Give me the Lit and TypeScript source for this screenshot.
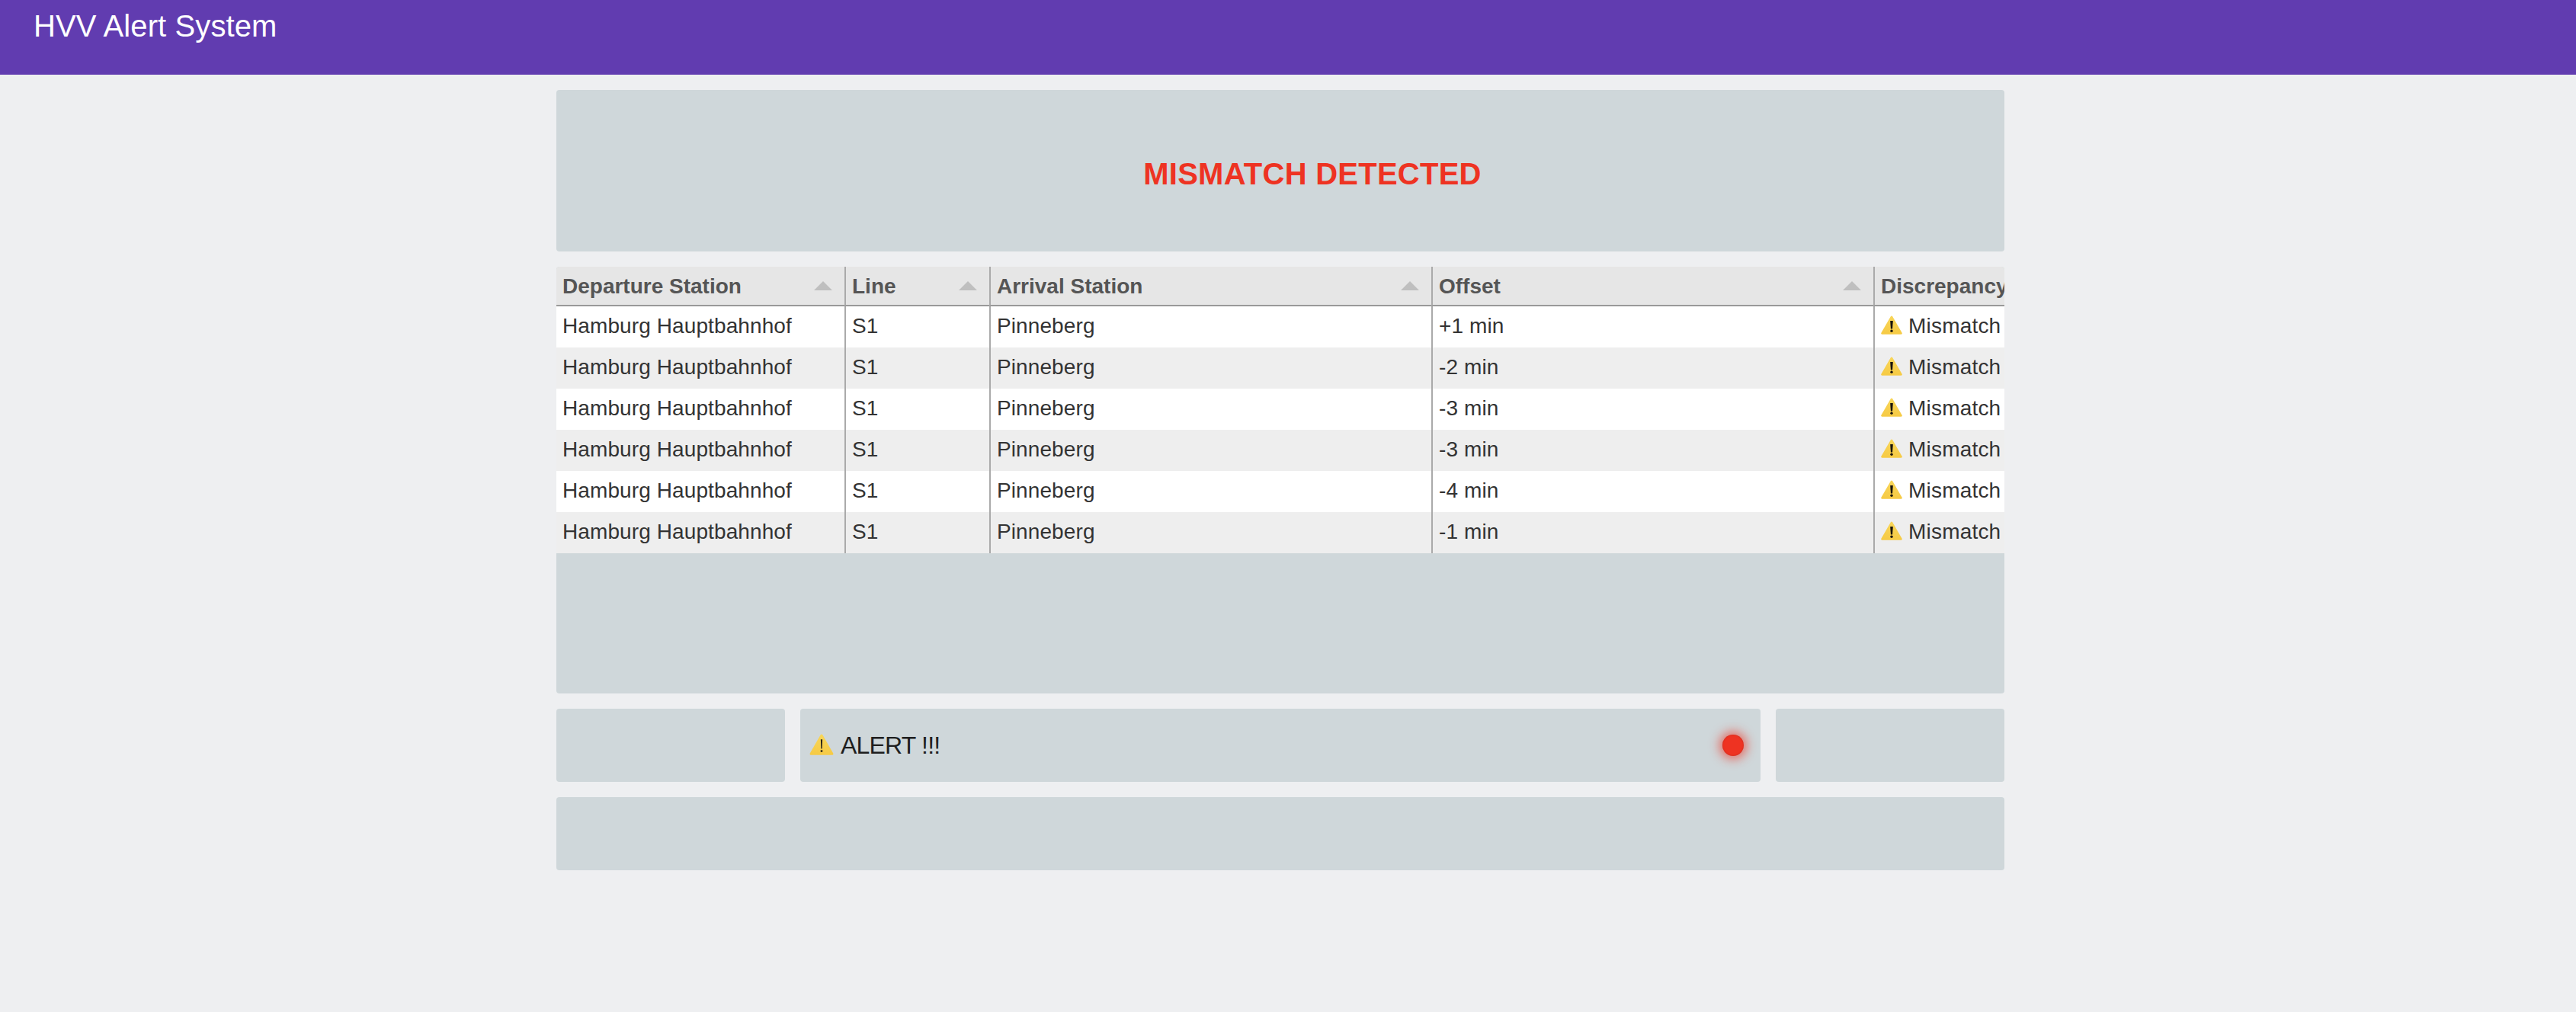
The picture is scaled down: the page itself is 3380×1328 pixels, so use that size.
import { LitElement, html, css, svg } from "lit";
import { customElement } from "lit/decorators.js";

const offsets = ["+1 min", "-2 min", "-3 min", "-3 min", "-4 min", "-1 min"];
const columns = ["Departure Station", "Line", "Arrival Station", "Offset", "Discrepancy"];

const warning = (cls: string, id: string, thin = false) => html`
  <svg class=${cls} viewBox="0 0 28 25" aria-hidden="true">
    <defs>
      <linearGradient id=${id} x1="0" y1="0" x2="0" y2="1">
        <stop offset="0" stop-color="#f8d65a"></stop>
        <stop offset="1" stop-color="#f6ca44"></stop>
      </linearGradient>
    </defs>
    <path d="M14 .4c.5 0 .9.3 1.2.8l12.4 21.6c.5.9 0 1.9-1 1.9H1.4c-1 0-1.5-1-1-1.9L12.8 1.2c.3-.5.7-.8 1.2-.8z" fill="url(#${id})"></path>
    ${thin
      ? svg`<path d="M13 6.5h2l-.4 11h-1.2z" fill="#2a2418"></path><circle cx="14" cy="20.2" r="1.3" fill="#2a2418"></circle>`
      : svg`<path d="M12.2 7h3.6l-.7 10.5h-2.2z" fill="#1a150c"></path><circle cx="14" cy="20.3" r="1.7" fill="#1a150c"></circle>`}
  </svg>
`;

@customElement("app-root")
export class AppRoot extends LitElement {
  static styles = css`
    :host {
      display: block;
      min-height: 1328px;
      background: #eeeff1;
      font-family: "Liberation Sans", Arial, sans-serif;
    }

    .toolbar {
      height: 98px;
      box-sizing: border-box;
      padding: 11px 0 0 44px;
      background: #613cb0;
      color: #fff;
      font-size: 40px;
      line-height: 46px;
      letter-spacing: 0.1px;
    }

    .main {
      display: flex;
      flex-direction: column;
      gap: 20px;
      width: 1900px;
      margin: 20px 0 0 730px;
    }

    .panel {
      background: #cfd7da;
      border-radius: 4px;
    }

    .headline {
      display: flex;
      align-items: center;
      justify-content: center;
      height: 212px;
      box-sizing: border-box;
      padding: 9px 0 0 84px;
      color: #ee3322;
      font-size: 40px;
      font-weight: 700;
      letter-spacing: 0.25px;
    }

    .grid-panel {
      height: 560px;
      overflow: hidden;
    }

    table {
      width: 2028px;
      table-layout: fixed;
      border-collapse: separate;
      border-spacing: 0;
    }

    th,
    td {
      box-sizing: border-box;
      padding: 0 0 0 8px;
      border-left: 2px solid #aaa;
      white-space: nowrap;
      overflow: hidden;
      text-align: left;
    }

    th:first-child,
    td:first-child {
      padding-left: 8px;
      border-left: 0;
    }

    th {
      height: 52px;
      padding-top: 1px;
      background: #e6e6e6;
      border-bottom: 2px solid #999;
      color: #555;
      font-size: 28px;
      font-weight: 700;
    }

    .th-inner {
      display: flex;
      align-items: center;
      justify-content: space-between;
      padding-right: 16px;
    }

    .arrow {
      width: 24px;
      height: 12px;
      margin-top: -2px;
      flex: none;
    }

    td {
      height: 54px;
      padding-bottom: 3px;
      color: #333;
      font-size: 28px;
      letter-spacing: 0.1px;
    }

    tr.even td {
      background: #eeeeee;
    }

    tr.odd td {
      background: #fff;
    }

    .status {
      display: flex;
      align-items: center;
      gap: 8px;
    }

    .status-icon {
      width: 28px;
      height: 25px;
      margin-top: -2px;
      flex: none;
    }

    .status span {
      letter-spacing: 0.2px;
    }

    .alert-row {
      display: grid;
      grid-template-columns: 300px 1fr 300px;
      gap: 20px;
    }

    .alert-row .panel,
    .footer {
      height: 96px;
    }

    .alert {
      display: flex;
      align-items: center;
      padding: 0 22px 0 12px;
      color: #1e1e1e;
      font-size: 32px;
      letter-spacing: -0.8px;
    }

    .alert-icon {
      width: 32px;
      height: 28px;
      margin: -2px 9px 0 0;
      flex: none;
    }

    .dot {
      width: 28px;
      height: 28px;
      margin-left: auto;
      border-radius: 50%;
      background: #ee3322;
      box-shadow: inset 0 0 2px rgba(150, 30, 20, 0.5), 0 0 14px 4px rgba(238, 51, 34, 0.65);
    }
  `;

  render() {
    return html`
      <div class="toolbar">HVV Alert System</div>
      <div class="main">
        <div class="panel headline">MISMATCH DETECTED</div>
        <div class="panel grid-panel">
          <table>
            <colgroup>
              <col style="width: 378px" />
              <col style="width: 190px" />
              <col style="width: 580px" />
              <col style="width: 580px" />
              <col style="width: 300px" />
            </colgroup>
            <thead>
              <tr>
                ${columns.map(
                  (c) => html`<th>
                    <div class="th-inner">
                      <span>${c}</span>
                      <svg class="arrow" viewBox="0 0 24 12"><path d="M12 0l12 12H0z" fill="#bfbfbf"></path></svg>
                    </div>
                  </th>`
                )}
              </tr>
            </thead>
            <tbody>
              ${offsets.map(
                (o, i) => html`<tr class=${i % 2 ? "even" : "odd"}>
                  <td>Hamburg Hauptbahnhof</td>
                  <td>S1</td>
                  <td>Pinneberg</td>
                  <td>${o}</td>
                  <td>
                    <div class="status">${warning("status-icon", `warn-${i}`)}<span>Mismatch</span></div>
                  </td>
                </tr>`
              )}
            </tbody>
          </table>
        </div>
        <div class="alert-row">
          <div class="panel"></div>
          <div class="panel alert">
            ${warning("alert-icon", "warn-alert", true)}
            <span>ALERT !!!</span>
            <span class="dot"></span>
          </div>
          <div class="panel"></div>
        </div>
        <div class="panel footer"></div>
      </div>
    `;
  }
}
